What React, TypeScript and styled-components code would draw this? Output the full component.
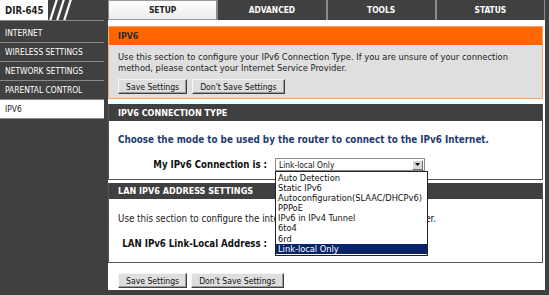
import styled, { createGlobalStyle } from 'styled-components'

const GlobalStyle = createGlobalStyle`
  html, body {
    margin: 0;
    padding: 0;
    background: #404040;
  }
  * {
    box-sizing: border-box;
  }
`

const FONT = `"DejaVu Sans Condensed", "Liberation Sans", sans-serif`

const tabs = ['SETUP', 'ADVANCED', 'TOOLS', 'STATUS']
const menu = ['INTERNET', 'WIRELESS SETTINGS', 'NETWORK SETTINGS', 'PARENTAL CONTROL', 'IPV6']
const options = [
  'Auto Detection',
  'Static IPv6',
  'Autoconfiguration(SLAAC/DHCPv6)',
  'PPPoE',
  'IPv6 in IPv4 Tunnel',
  '6to4',
  '6rd',
  'Link-local Only',
]

const App: React.FC = () => {
  return (
    <>
      <GlobalStyle />
      <Page>
        <TopBar>
          <Logo>DIR-645</Logo>
          <Slashes>
            <svg width="60" height="20" viewBox="0 0 60 20">
              <path d="M2 21 L9 -1 M9 21 L16 -1 M16 21 L23 -1" stroke="#fff" strokeWidth="2.2" fill="none" />
            </svg>
          </Slashes>
          <Tabs>
            {tabs.map((t, i) => (
              <Tab key={t} active={i === 0}>
                {t}
              </Tab>
            ))}
          </Tabs>
        </TopBar>
        <Body>
          <Sidebar>
            {menu.map((m) => (
              <MenuItem key={m} active={m === 'IPV6'}>
                {m}
              </MenuItem>
            ))}
          </Sidebar>
          <Main>
            <OrangeBox>
              <OrangeHeader>IPV6</OrangeHeader>
              <OrangeBody>
                <Text>
                  Use this section to configure your IPv6 Connection Type. If you are unsure of your connection
                  <br />
                  method, please contact your Internet Service Provider.
                </Text>
                <ButtonRow>
                  <Button>Save Settings</Button>
                  <Button>Don't Save Settings</Button>
                </ButtonRow>
              </OrangeBody>
            </OrangeBox>

            <Section>
              <SectionHeader>IPV6 CONNECTION TYPE</SectionHeader>
              <SectionBody>
                <Lead>Choose the mode to be used by the router to connect to the IPv6 Internet.</Lead>
                <FieldRow>
                  <Label>My IPv6 Connection is :</Label>
                  <SelectWrap>
                    <Select>
                      <span>Link-local Only</span>
                      <Arrow>
                        <svg width="5" height="3" viewBox="0 0 5 3">
                          <path d="M0 0 H5 L2.5 3 Z" fill="#000" />
                        </svg>
                      </Arrow>
                    </Select>
                    <ListBox>
                      {options.map((o) => (
                        <Option key={o} selected={o === 'Link-local Only'}>
                          {o}
                        </Option>
                      ))}
                    </ListBox>
                  </SelectWrap>
                </FieldRow>
              </SectionBody>
            </Section>

            <Section>
              <SectionHeader small>LAN IPV6 ADDRESS SETTINGS</SectionHeader>
              <LanBody>
                <LanText>Use this section to configure the internal network settings of your router.</LanText>
                <FieldRow>
                  <Label>LAN IPv6 Link-Local Address :</Label>
                </FieldRow>
              </LanBody>
            </Section>

            <BottomButtons>
              <Button>Save Settings</Button>
              <Button>Don't Save Settings</Button>
            </BottomButtons>
          </Main>
        </Body>
      </Page>
    </>
  )
}

export default App

const Page = styled.div`
  width: 549px;
  height: 295px;
  background: #404040;
  display: flex;
  flex-direction: column;
  overflow: hidden;
  font-family: ${FONT};
`

const TopBar = styled.div`
  height: 20px;
  display: flex;
  padding-right: 4px;
`

const Logo = styled.div`
  width: 48px;
  background: #fff;
  color: #222;
  font-weight: bold;
  font-size: 9.6px;
  display: flex;
  align-items: center;
  padding-left: 5px;
`

const Slashes = styled.div`
  width: 60px;
  display: flex;
`

const Tabs = styled.div`
  flex: 1;
  display: flex;
`

const Tab = styled.div<{ active?: boolean }>`
  flex: 1;
  display: flex;
  align-items: center;
  justify-content: center;
  font-size: 8.4px;
  font-weight: bold;
  color: ${(p) => (p.active ? '#222' : '#fff')};
  background: ${(p) => (p.active ? 'linear-gradient(#ffffff, #ececec)' : '#404040')};
  border: ${(p) => (p.active ? '1px solid #9a9a9a' : 'none')};
  border-left: 1px solid #8a8a8a;
  border-right: 1px solid #8a8a8a;
`

const Body = styled.div`
  flex: 1;
  display: flex;
  padding-bottom: 5px;
`

const Sidebar = styled.div`
  width: 104px;
  border-top: 1px solid #8a8a8a;
  padding-top: 3px;
`

const MenuItem = styled.div<{ active?: boolean }>`
  height: 19px;
  display: flex;
  align-items: center;
  padding-left: 5px;
  font-size: 8.4px;
  color: ${(p) => (p.active ? '#222' : '#fff')};
  background: ${(p) => (p.active ? '#fff' : '#404040')};
  border-bottom: 1px solid #8a8a8a;
`

const Main = styled.div`
  flex: 1;
  background: #fff;
  margin: 0 4px 0 4px;
  padding: 6px 2px 0 0;
  display: flex;
  flex-direction: column;
`

const OrangeBox = styled.div`
  border: 1px solid #f5a66a;
  background: #dfdfdf;
  height: 73px;
`

const OrangeHeader = styled.div`
  height: 18px;
  background: #ff6600;
  color: #2a2a2a;
  font-weight: bold;
  font-size: 8.8px;
  display: flex;
  align-items: center;
  padding-left: 9px;
`

const OrangeBody = styled.div`
  padding: 7px 9px 0;
`

const Text = styled.p`
  margin: 0;
  font-size: 9.3px;
  line-height: 10.5px;
  color: #222;
  white-space: nowrap;
`

const LanText = styled(Text)`
  font-size: 9.7px;
`

const ButtonRow = styled.div`
  display: flex;
  gap: 5px;
  margin-top: 6px;
`

const Button = styled.button`
  height: 15px;
  padding: 0 7px;
  font-family: ${FONT};
  font-size: 8.6px;
  color: #111;
  background: #dedede;
  border: 1px solid;
  border-color: #f4f4f4 #404040 #404040 #f4f4f4;
  box-shadow: inset -1px -1px #9a9a9a;
  display: flex;
  align-items: center;
`

const Section = styled.div`
  margin-top: 5px;
  border: 1px solid #555;
  border-top: none;
  background: #fff;
  & + & {
    margin-top: 3px;
  }
`

const SectionHeader = styled.div<{ small?: boolean }>`
  height: ${(p) => (p.small ? '16px' : '17px')};
  background: #404040;
  color: #fff;
  font-weight: bold;
  font-size: 9px;
  display: flex;
  align-items: center;
  padding-left: 9px;
`

const SectionBody = styled.div`
  height: 58px;
  padding: 13px 9px 0;
`

const LanBody = styled.div`
  height: 63px;
  padding: 15px 9px 0;
`

const Lead = styled.div`
  font-size: 9.8px;
  font-weight: bold;
  color: #1f3c70;
`

const FieldRow = styled.div`
  display: flex;
  align-items: center;
  margin-top: 13px;
`

const Label = styled.div`
  width: 157px;
  padding-right: 8px;
  text-align: right;
  font-size: 9.6px;
  font-weight: bold;
  color: #111;
  white-space: nowrap;
`

const SelectWrap = styled.div`
  position: relative;
`

const Select = styled.div`
  width: 150px;
  height: 13px;
  border: 1px solid #8a8a8a;
  background: #fff;
  display: flex;
  align-items: center;
  justify-content: space-between;
  padding: 0 1px 0 3px;
  font-size: 8.4px;
  color: #111;
`

const Arrow = styled.div`
  width: 11px;
  height: 10px;
  background: #d8d8d8;
  border: 1px solid;
  border-color: #fff #707070 #707070 #fff;
  display: flex;
  align-items: center;
  justify-content: center;
`

const ListBox = styled.div`
  position: absolute;
  top: 13px;
  left: 0;
  width: 153px;
  border: 1px solid #222;
  background: #fff;
  padding: 1px 0;
  z-index: 2;
`

const Option = styled.div<{ selected?: boolean }>`
  height: 10.1px;
  line-height: 10px;
  padding-left: 2px;
  font-size: 9.2px;
  color: ${(p) => (p.selected ? '#fff' : '#111')};
  background: ${(p) => (p.selected ? '#0a246a' : 'transparent')};
  white-space: nowrap;
`

const BottomButtons = styled.div`
  display: flex;
  gap: 4px;
  padding: 10px 0 0 10px;
`
